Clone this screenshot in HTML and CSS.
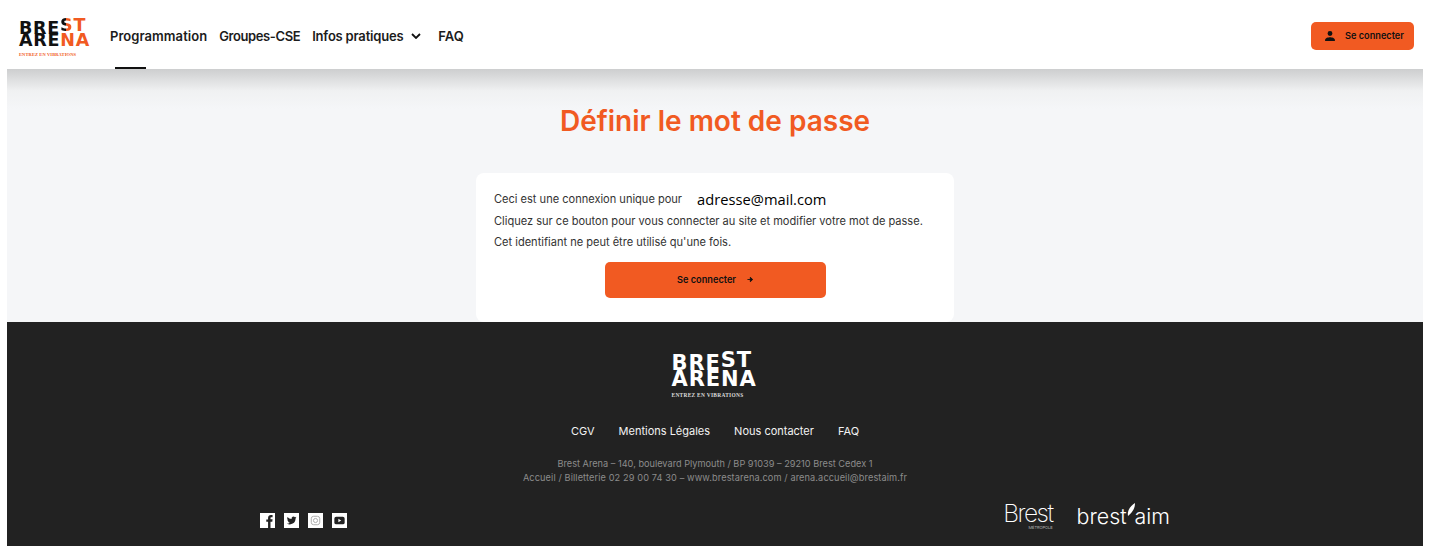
FILE: index.html
```html
<!DOCTYPE html>
<html lang="fr">

<head>
    <meta charset="UTF-8">
    <meta name="viewport" content="width=device-width, initial-scale=1.0">
    <title>Brest Arena - Définir le mot de passe</title>
    <link rel="stylesheet" href="styles.css">
</head>

<body>
    <header class="site-header">
        <a class="logo logo-dark" href="#">
            <span class="logo-line">BRE<span class="logo-raised"><span class="logo-split">S</span><span class="logo-accent">T</span></span></span>
            <span class="logo-line">ARE<span class="logo-accent">NA</span></span>
            <span class="logo-tag">ENTREZ EN VIBRATIONS</span>
        </a>
        <nav class="main-nav">
            <a class="nav-link nav-active" href="#">Programmation</a>
            <a class="nav-link nav-tight" href="#">Groupes-CSE</a>
            <a class="nav-link nav-dropdown" href="#">Infos pratiques
                <svg class="chevron" viewBox="0 0 10 6" width="10" height="6">
                    <path d="M1 1l4 4 4-4" fill="none" stroke="#111" stroke-width="1.8" />
                </svg>
            </a>
            <a class="nav-link" href="#">FAQ</a>
        </nav>
        <a class="login-button" href="#">
            <svg viewBox="0 0 24 24" width="14" height="14">
                <path d="M12 12a4.2 4.2 0 1 0 0-8.400 4.200 4.200 0 0 0 0 8.400zm0 2.100c-2.800 0-8.400 1.400-8.400 4.200v2.100h16.800v-2.100c0-2.800-5.600-4.200-8.400-4.200z" fill="#111" />
            </svg>
            <span>Se connecter</span>
        </a>
    </header>

    <main class="page-main">
        <h1>Définir le mot de passe</h1>
        <div class="login-card">
            <p>Ceci est une connexion unique pour <span class="mail">adresse@mail.com</span></p>
            <p>Cliquez sur ce bouton pour vous connecter au site et modifier votre mot de passe.</p>
            <p>Cet identifiant ne peut être utilisé qu'une fois.</p>
            <a class="card-button" href="#">
                <span>Se connecter</span>
                <svg viewBox="0 0 8 8" width="7" height="7">
                    <path d="M0.500 4h5M3.800 1.500L6.500 4 3.800 6.500z" fill="#111" stroke="#111" stroke-width="1" />
                </svg>
            </a>
        </div>
    </main>

    <footer class="site-footer">
        <a class="logo logo-light" href="#">
            <span class="logo-line">BRE<span class="logo-raised">ST</span></span>
            <span class="logo-line">ARENA</span>
            <span class="logo-tag">ENTREZ EN VIBRATIONS</span>
        </a>
        <nav class="footer-nav">
            <a href="#">CGV</a>
            <a href="#">Mentions Légales</a>
            <a href="#">Nous contacter</a>
            <a href="#">FAQ</a>
        </nav>
        <address class="footer-address">
            <span>Brest Arena – 140, boulevard Plymouth / BP 91039 – 29210 Brest Cedex 1</span>
            <span class="address-wide">Accueil / Billetterie 02 29 00 74 30 – www.brestarena.com / arena.accueil@brestaim.fr</span>
        </address>
        <div class="footer-bottom">
            <div class="socials">
                <a href="#"><svg viewBox="0 0 16 16" width="15" height="15">
                        <rect width="16" height="16" fill="#fff" />
                        <path d="M8.600 16V9.300H6.700V6.800h1.900V5.200c0-2.100 1.200-3.200 3.100-3.200h1.700v2.400h-1.100c-.9 0-1.100.4-1.100 1.100v1.300h2.200l-.3 2.500h-1.900V16z" fill="#222" />
                    </svg></a>
                <a href="#"><svg viewBox="0 0 16 16" width="15" height="15">
                        <rect width="16" height="16" fill="#fff" />
                        <path d="M13.300 4.900c-.4.200-.8.300-1.200.3.400-.3.800-.7.900-1.200-.4.200-.9.400-1.300.5a2.100 2.100 0 0 0-3.600 1.900A6 6 0 0 1 3.700 4.200a2.100 2.100 0 0 0 .6 2.800c-.3 0-.7-.1-.9-.3 0 1 .7 1.900 1.700 2.100-.3.100-.6.100-.9 0 .3.900 1.100 1.400 2 1.500a4.200 4.200 0 0 1-3.100.9 6 6 0 0 0 9.200-5.300c.4-.3.700-.6 1-1z" fill="#222" />
                    </svg></a>
                <a href="#"><svg viewBox="0 0 16 16" width="15" height="15">
                        <rect width="16" height="16" fill="#fff" />
                        <rect x="3.500" y="3.500" width="9" height="9" rx="2.500" fill="none" stroke="#aaa" />
                        <circle cx="8" cy="8" r="2.200" fill="none" stroke="#aaa" />
                    </svg></a>
                <a href="#"><svg viewBox="0 0 16 16" width="15" height="15">
                        <rect width="16" height="16" fill="#fff" />
                        <rect x="2.500" y="4" width="11" height="8" rx="2" fill="#222" />
                        <path d="M6.800 6.200v3.600L9.800 8z" fill="#fff" />
                    </svg></a>
            </div>
            <div class="partners">
                <span class="partner-metropole">Brest<small>MÉTROPOLE</small></span>
                <span class="partner-aim">brest<svg viewBox="0 0 8 14" width="8" height="14">
                        <path d="M1 13C0 8 3 3 8 0c0 5-2 9-7 13z" fill="#fff" />
                    </svg>aim</span>
            </div>
        </div>
    </footer>
</body>

</html>
```

FILE: styles.css
```css
* {
    box-sizing: border-box;
}

body {
    font-family: Inter, "Open Sans", sans-serif;
    margin: 0;
    height: 554px;
    overflow: hidden;
    background-color: white;
    color: #333;
}

a {
    color: inherit;
    text-decoration: none;
}

.site-header {
    display: flex;
    align-items: center;
    height: 69px;
    padding: 2px 15px 0 19px;
    background-color: white;
}

.logo {
    display: flex;
    flex-direction: column;
    font-family: "DejaVu Sans", sans-serif;
    font-weight: bold;
}

.logo-dark {
    width: 91px;
    height: 40px;
    margin-top: 4px;
    font-size: 17.500px;
    color: #111;
    letter-spacing: 0.750px;
}

.logo-line {
    display: block;
    height: 15.500px;
    line-height: 15.500px;
    white-space: nowrap;
}

.logo-raised {
    vertical-align: 3px;
}

.logo-split {
    background: linear-gradient(90deg, #111 50%, #f15a22 50%);
    -webkit-background-clip: text;
    background-clip: text;
    color: transparent;
}

.logo-accent {
    color: #f15a22;
}

.logo-tag {
    margin-top: 3px;
    font-family: "Liberation Serif", serif;
    font-size: 4.500px;
    line-height: 6px;
    letter-spacing: 0.100px;
    white-space: nowrap;
}

.logo-dark .logo-tag {
    color: #f15a22;
}

.main-nav {
    display: flex;
    align-items: center;
    gap: 12px;
    flex: 1;
}

.nav-link {
    position: relative;
    font-size: 13px;
    font-weight: 600;
    letter-spacing: 0.050px;
    color: #1c1c1c;
}

.nav-tight {
    letter-spacing: -0.400px;
}

.nav-active::after {
    content: "";
    position: absolute;
    left: 5px;
    top: 39px;
    width: 31px;
    height: 2px;
    background-color: #111;
}

.nav-dropdown {
    display: flex;
    align-items: center;
    gap: 8px;
    margin-right: 5px;
    letter-spacing: -0.200px;
}

.login-button {
    display: flex;
    align-items: center;
    gap: 8px;
    width: 103px;
    height: 28px;
    padding-left: 12px;
    border-radius: 5px;
    background-color: #f15a22;
    font-size: 9.200px;
    font-weight: 600;
    color: #111;
    white-space: nowrap;
}

.page-main {
    height: 253px;
    margin: 0 6px 0 7px;
    padding-top: 35px;
    background: linear-gradient(#cdcecf, #f0f1f2 22px, #f5f6f8 40px);
}

h1 {
    margin: 0 0 34px;
    text-align: center;
    font-size: 28px;
    line-height: 35px;
    font-weight: 600;
    color: #f15a22;
}

.login-card {
    width: 478px;
    height: 149px;
    margin: 0 auto;
    padding: 16px 18px 0;
    border-radius: 8px;
    background-color: white;
    font-size: 11.050px;
    color: #333;
}

.login-card p {
    margin: 0;
    height: 21.500px;
    line-height: 21.500px;
    white-space: nowrap;
}

.mail {
    margin-left: 12px;
    font-family: "Open Sans", sans-serif;
    font-size: 14.700px;
    line-height: 0;
    vertical-align: -2px;
    color: #000;
}

.card-button {
    display: flex;
    align-items: center;
    justify-content: center;
    gap: 11px;
    width: 221px;
    height: 36px;
    margin: 8px auto 0 111px;
    border-radius: 5px;
    background-color: #f15a22;
    font-size: 9.200px;
    font-weight: 600;
    color: #111;
}

.site-footer {
    display: flex;
    flex-direction: column;
    align-items: center;
    height: 224px;
    margin: 0 6px 0 7px;
    padding: 29px 253px 0;
    background-color: #222;
    color: white;
}

.logo-light {
    width: 87px;
    height: 47px;
    font-size: 21px;
    letter-spacing: 0.900px;
}

.logo-light .logo-line {
    height: 19px;
    line-height: 19px;
}

.logo-light .logo-tag {
    margin-top: 3px;
    font-size: 5.400px;
    letter-spacing: 0.300px;
    color: #ddd;
}

.footer-nav {
    display: flex;
    gap: 24px;
    margin-top: 25px;
    font-size: 11px;
    line-height: 16px;
    color: #f2f2f2;
}

.footer-address {
    display: flex;
    flex-direction: column;
    align-items: center;
    margin-top: 18px;
    font-style: normal;
    font-size: 9.200px;
    line-height: 14px;
    color: #8c8c8c;
}

.address-wide {
    letter-spacing: 0.110px;
}

.footer-bottom {
    display: flex;
    justify-content: space-between;
    align-items: flex-end;
    width: 100%;
    margin-top: 16px;
}

.socials {
    display: flex;
    gap: 9px;
}

.socials a {
    display: block;
    height: 15px;
}

.partners {
    display: flex;
    align-items: center;
    gap: 24px;
    margin-bottom: -3px;
}

.partner-metropole {
    display: flex;
    flex-direction: column;
    align-items: flex-end;
    font-size: 24.500px;
    font-weight: 200;
    line-height: 24px;
    letter-spacing: -1.500px;
}

.partner-metropole small {
    font-size: 4px;
    line-height: 5px;
    letter-spacing: 0;
}

.partner-aim {
    display: flex;
    align-items: flex-start;
    font-size: 21.400px;
    font-weight: 300;
    line-height: 28px;
}

.partner-aim svg {
    margin-top: 1px;
}
```
